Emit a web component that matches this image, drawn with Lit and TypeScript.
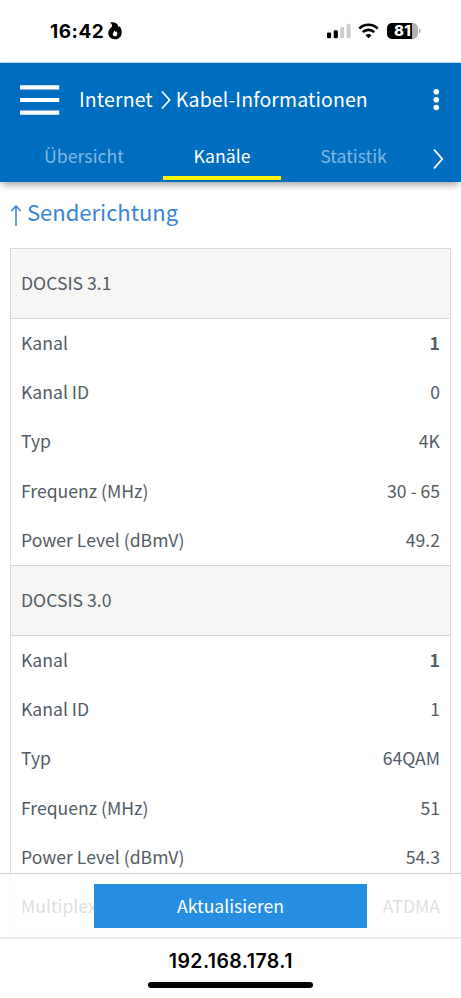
import { LitElement, html, css } from "lit";
import { customElement, property } from "lit/decorators.js";

interface Row { label: string; value: string; bold?: boolean; }
interface Group { title: string; rows: Row[]; }

const groups: Group[] = [
  {
    title: "DOCSIS 3.1",
    rows: [
      { label: "Kanal", value: "1", bold: true },
      { label: "Kanal ID", value: "0" },
      { label: "Typ", value: "4K" },
      { label: "Frequenz (MHz)", value: "30 - 65" },
      { label: "Power Level (dBmV)", value: "49.2" },
    ],
  },
  {
    title: "DOCSIS 3.0",
    rows: [
      { label: "Kanal", value: "1", bold: true },
      { label: "Kanal ID", value: "1" },
      { label: "Typ", value: "64QAM" },
      { label: "Frequenz (MHz)", value: "51" },
      { label: "Power Level (dBmV)", value: "54.3" },
      { label: "Multiplex", value: "ATDMA" },
    ],
  },
];

@customElement("status-bar")
class StatusBar extends LitElement {
  static styles = css`
    :host { display: flex; height: 62px; box-sizing: border-box; padding: 0 40px 0 50px; align-items: center; background: #fff; font-family: Inter, sans-serif; color: #000; }
    .time { font-size: 19px; font-weight: 700; line-height: 24px; letter-spacing: 0.5px; margin-top: 2px; }
    .flame { margin-left: 4px; }
    .icons { margin-left: auto; display: flex; align-items: center; }
    .wifi { margin-left: 7px; }
    .battery { margin-left: 8px; display: grid; grid-template-columns: 31px 3px; align-items: center; height: 16px; }
    .level { height: 16px; width: 31px; border-radius: 5px; background: linear-gradient(90deg, #000 25px, #b3b3b3 25px); color: #fff; font-size: 15px; line-height: 16px; font-weight: 800; text-align: center; letter-spacing: 0.3px; }
  `;
  render() {
    return html`
      <span class="time">16:42</span>
      <svg class="flame" width="14" height="18" viewBox="0 0 14 18">
        <path fill="#000" d="M2.1.6C7.3-.4 10.2 2 10.3 5.2c.6-.2.9-.7 1-1.3C13 5.700 13.900 8 13.700 10.700 13.400 14.800 10.800 17.300 7 17.300 3 17.300.3 14.600.3 11.100.3 8.300 1.700 6.500 3.600 4.900 4.500 3.500 3.800 1.800 2.100.6Z"/>
        <path fill="#fff" d="M6.700 8C7.100 9 7 9.600 7.300 10.100 7.700 10 7.900 9.600 8 9.300 9 10.100 9.400 11 9.300 12 9.100 13.500 8.200 14.300 6.900 14.300 5.600 14.300 4.700 13.300 4.800 12 4.900 10.300 6.500 9.800 6.700 8Z"/>
      </svg>
      <div class="icons">
        <svg width="24" height="16" viewBox="0 0 24 16">
          <rect x="0" y="9.600" width="4.200" height="5.600" rx="1.200"/>
          <rect x="6.700" y="7.200" width="4.200" height="8" rx="1.200"/>
          <rect x="13.200" y="4" width="4" height="11.200" rx="1.200" fill="#ccc"/>
          <rect x="19.600" y="0.800" width="4" height="14.400" rx="1.200" fill="#ccc"/>
        </svg>
        <svg class="wifi" width="21" height="16" viewBox="0 0 21 16">
          <path fill="none" stroke="#000" stroke-width="2.600" d="M1.300 5.600C6.400.5 14.600.5 19.700 5.600M4.700 9.100C8 6.100 13 6.100 16.300 9.100"/>
          <path d="M10.500 15.300 7.400 12.200C9.200 10.600 11.800 10.600 13.600 12.200Z"/>
        </svg>
        <div class="battery">
          <span class="level">81</span>
          <svg width="3" height="6" viewBox="0 0 3 6"><path fill="#b3b3b3" d="M1 .5C3.300 1.300 3.300 4.700 1 5.500Z"/></svg>
        </div>
      </div>
    `;
  }
}

@customElement("nav-header")
class NavHeader extends LitElement {
  static styles = css`
    :host { display: flex; flex-direction: column; height: 120px; box-sizing: border-box; border-top: 1px solid #b9d3ea; background: #006ec0; color: #fff; box-shadow: 0 5px 7px -2px rgba(0, 0, 0, 0.35); position: relative; z-index: 1; font-size: 19.500px; }
    .top { display: flex; align-items: center; height: 73px; padding: 0 21px 0 20px; }
    .menu { margin-right: 19px; }
    .crumb { line-height: 28px; margin-top: -2px; white-space: nowrap; letter-spacing: 0.12px; }
    .sep { margin: 0 5px 0 8px; }
    .dots { margin-left: auto; }
    .tabs { display: grid; grid-template-columns: 45px 118px 118px 118px 1fr; height: 45px; font-size: 17.700px; }
    .tab { text-align: center; line-height: 39px; height: 45px; box-sizing: border-box; color: #80b6df; }
    .first { grid-column: 1 / 3; padding-left: 5px; }
    .active { height: 44px; color: #fff; border-bottom: 4px solid #fff200; }
    .next { margin: 12px 0 0 34px; }
    .stat { padding-left: 27px; }
  `;
  render() {
    return html`
      <div class="top">
        <svg class="menu" width="40" height="30" viewBox="0 0 40 30" fill="#fff"><path d="M0 .2h39.200v4.200H0zM0 12.900h39.200v4.200H0zM0 25.600h39.200v4.200H0z"/></svg>
        <span class="crumb">Internet</span>
        <svg class="sep" width="10" height="20" viewBox="0 0 10 20"><path d="M1 1.500 8.600 10 1 18.500" fill="none" stroke="#fff" stroke-width="1.700"/></svg>
        <span class="crumb">Kabel-Informationen</span>
        <svg class="dots" width="7" height="23" viewBox="0 0 7 23" fill="#fff"><circle cx="3.300" cy="3.700" r="2.800"/><circle cx="3.300" cy="11.700" r="2.800"/><circle cx="3.300" cy="19.500" r="2.800"/></svg>
      </div>
      <div class="tabs">
        <span class="tab first">Übersicht</span>
        <span class="tab active">Kanäle</span>
        <span class="tab stat">Statistik</span>
        <svg class="next" width="11" height="22" viewBox="0 0 11 22"><path d="M1 1.500 9.200 11 1 20.500" fill="none" stroke="#fff" stroke-width="1.900"/></svg>
      </div>
    `;
  }
}

@customElement("channel-group")
class ChannelGroup extends LitElement {
  @property({ attribute: false }) group!: Group;
  static styles = css`
    :host { display: block; }
    .title { height: 71px; box-sizing: border-box; margin: 0 -1px; padding: 0 10px; line-height: 67px; border: 1px solid #d6d8d9; background: #f6f6f4; }
    .row { display: flex; justify-content: space-between; height: 49.200px; line-height: 47px; padding: 0 10px; }
    .bold { font-weight: 700; }
  `;
  render() {
    return html`
      <div class="title">${this.group.title}</div>
      ${this.group.rows.map((r) => html`<div class="row"><span>${r.label}</span><span class=${r.bold ? "bold" : ""}>${r.value}</span></div>`)}
    `;
  }
}

@customElement("app-root")
class AppRoot extends LitElement {
  static styles = css`
    :host { display: flex; flex-direction: column; height: 998px; overflow: hidden; background: #fff; color: #525c66; font: 17.600px/1.4 "Noto Sans CJK SC", "Noto Sans", sans-serif; }
    main { position: relative; height: 755px; padding: 0 10px; overflow: hidden; }
    h2 { display: flex; align-items: flex-start; gap: 5px; margin: 0; height: 66px; font-size: 22px; font-weight: 400; color: #3a85d8; }
    .arrow { margin-top: 22px; }
    .heading { line-height: 58px; }
    .card { border: 1px solid #dfe1e2; border-top: 0; }
    .actions { position: absolute; left: 0; right: 0; bottom: 0; height: 64px; box-sizing: border-box; border-top: 1px solid #d0d0d1; background: rgba(255, 255, 255, 0.8); display: flex; justify-content: center; align-items: flex-start; padding-top: 10px; }
    .refresh { width: 273px; height: 44px; border: 0; padding: 0 0 1px; background: #268ee0; color: #fff; font: inherit; line-height: 43px; }
    footer { border-top: 2px solid #ebebec; display: flex; flex-direction: column; align-items: center; color: #000; font: 600 19.500px/24px Inter, sans-serif; }
    .host { margin-top: 10px; letter-spacing: 0.420px; padding-left: 0.600px; }
    .home { width: 165px; height: 6px; border-radius: 3px; background: #000; margin-top: 9px; }
  `;
  render() {
    return html`
      <status-bar></status-bar>
      <nav-header></nav-header>
      <main>
        <h2>
          <svg class="arrow" width="12" height="23" viewBox="0 0 12 23"><path d="M6 22V2M1.200 7 6 2 10.800 7" fill="none" stroke="#3a85d8" stroke-width="1.500"/></svg>
          <span class="heading">Senderichtung</span>
        </h2>
        <div class="card">${groups.map((g) => html`<channel-group .group=${g}></channel-group>`)}</div>
        <div class="actions"><button class="refresh">Aktualisieren</button></div>
      </main>
      <footer><span class="host">192.168.178.1</span><span class="home"></span></footer>
    `;
  }
}
